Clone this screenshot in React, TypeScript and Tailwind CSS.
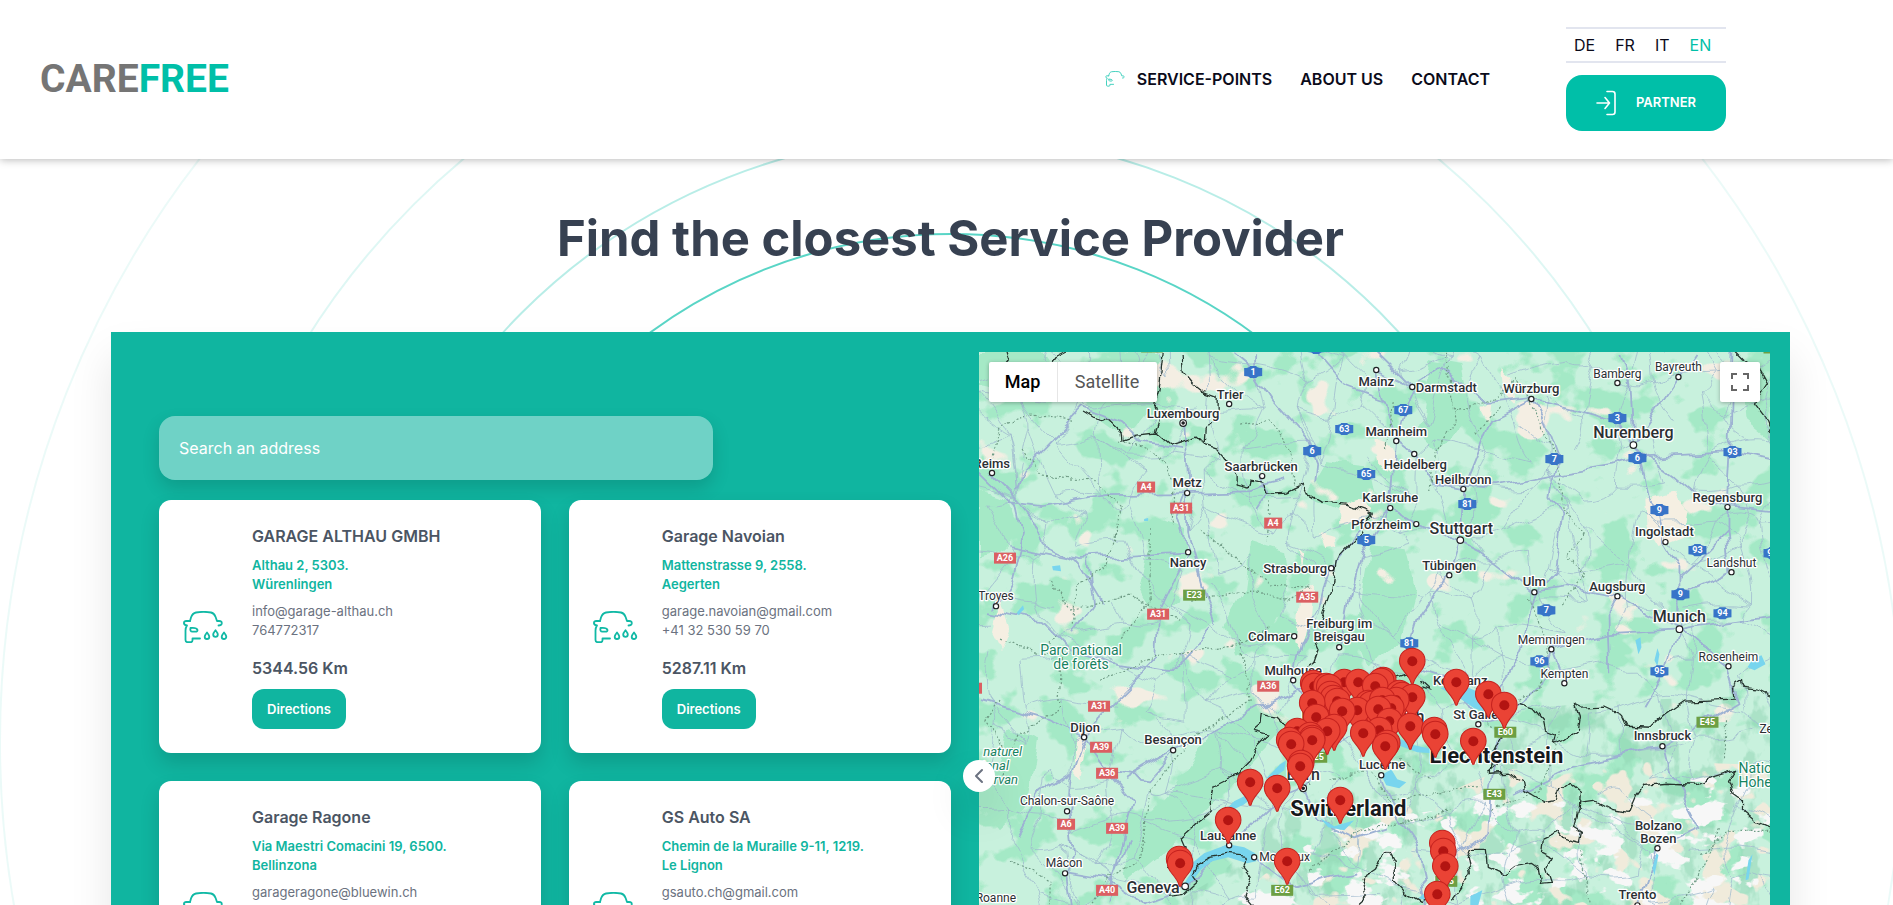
import React from "react";
import { ChevronLeft } from "lucide-react";

type Garage = {
  name: string;
  street: string;
  town: string;
  email: string;
  phone?: string;
  distance?: string;
};

const garages: Garage[] = [
  { name: "GARAGE ALTHAU GMBH", street: "Althau 2, 5303.", town: "Würenlingen", email: "info@garage-althau.ch", phone: "764772317", distance: "5344.56 Km" },
  { name: "Garage Navoian", street: "Mattenstrasse 9, 2558.", town: "Aegerten", email: "garage.navoian@gmail.com", phone: "+41 32 530 59 70", distance: "5287.11 Km" },
  { name: "Garage Ragone", street: "Via Maestri Comacini 19, 6500.", town: "Bellinzona", email: "garageragone@bluewin.ch" },
  { name: "GS Auto SA", street: "Chemin de la Muraille 9-11, 1219.", town: "Le Lignon", email: "gsauto.ch@gmail.com" },
];

function CarOutline() {
  return (
    <>
      <path d="M7 10 8 6.500C9 3.500 10.500 2 13 1.500 17 .8 24 .8 28 1.500c2.500.5 3.600 2 4.600 4.500L34 10h2c2.200 0 3 1 2.700 2.700C38.400 14 37.500 14.500 35.500 14.500" />
      <path d="M7 10H3.500C1.500 10 .8 11 1 12.500 1.300 14 2.500 14.300 4 14.500 3 16 2.500 17.500 2.500 19.500V29c0 1.500.8 2.200 2.200 2.200h3C9 31.200 9.500 30.500 9.500 29.300V27.500H17" />
      <path d="M7.500 17c3-.3 6.500.3 7 2 .2 1.200-.8 1.700-2 1.700H9.500C7.500 20.700 7 19 7.500 17Z" />
    </>
  );
}

function WashIcon({ className }: { className: string }) {
  return (
    <svg viewBox="0 0 45 32" className={className} fill="none" stroke="currentColor" strokeWidth="1.800" strokeLinecap="round" strokeLinejoin="round" aria-hidden="true">
      <CarOutline />
      <path d="M24 21.500c1.600 2 2.300 3 2.300 4.200a2.300 2.300 0 0 1-4.600 0c0-1.200.7-2.200 2.300-4.200Z" />
      <path d="M32.500 19.300c1.600 2 2.300 3 2.300 4.200a2.300 2.300 0 0 1-4.600 0c0-1.200.7-2.200 2.300-4.200Z" />
      <path d="M41 21.500c1.600 2 2.300 3 2.300 4.200a2.300 2.300 0 0 1-4.600 0c0-1.200.7-2.200 2.300-4.200Z" />
    </svg>
  );
}

function Header() {
  return (
    <header className="relative z-10 flex min-h-[159px] items-center justify-between bg-white pr-[167px] pb-[2px] pl-10 shadow-[0_1px_8px_rgba(0,0,0,0.28)]">
      <a href="#home" className="font-[Roboto,sans-serif] text-[39px] leading-10 font-bold text-[#757575]">
        CARE<span className="text-[#00bfa8]">FREE</span>
      </a>
      <div className="flex items-center gap-[76px]">
        <nav className="flex items-center gap-7 text-base font-semibold text-[#0b0b1a]">
          <a href="#service-points" className="flex items-center gap-3">
            <svg viewBox="0 0 40 33" className="h-4 w-5 text-[#3fcfbd]" fill="none" stroke="currentColor" strokeWidth="2" strokeLinecap="round" aria-hidden="true">
              <CarOutline />
            </svg>
            SERVICE-POINTS
          </a>
          <a href="#about">ABOUT US</a>
          <a href="#contact">CONTACT</a>
        </nav>
        <div className="flex w-40 flex-col gap-3">
          <div className="flex gap-5 border-y-2 border-[#e2e5ef] px-2 py-1 text-base text-[#0b0b1a]">
            <a href="#de">DE</a>
            <a href="#fr">FR</a>
            <a href="#it">IT</a>
            <a href="#en" className="text-[#00bfa8]">EN</a>
          </div>
          <button type="button" className="flex h-14 items-center justify-center gap-5 rounded-2xl bg-[#00bfa8] text-[13px] font-semibold text-white">
            <svg viewBox="0 0 20 26" className="h-[26px] w-5" fill="none" stroke="currentColor" strokeWidth="1.600" strokeLinecap="round" strokeLinejoin="round" aria-hidden="true">
              <path d="M11 1.500h5.500a2.500 2.500 0 0 1 2.500 2.500v18a2.500 2.500 0 0 1-2.500 2.500H11M1 13h12M9 7.500l4.500 5.500L9 18.500" />
            </svg>
            PARTNER
          </button>
        </div>
      </div>
    </header>
  );
}

function Rings() {
  const rings = [
    { r: 508, o: 0.65 },
    { r: 607, o: 0.28 },
    { r: 760, o: 0.13 },
    { r: 951, o: 0.08 },
  ];
  return (
    <svg className="pointer-events-none absolute top-0 left-1/2 h-[1540px] w-[1910px] -translate-x-1/2" viewBox="-959 -583 1910 1540" fill="none" stroke="#00bfa8" strokeWidth="2" aria-hidden="true">
      {rings.map((ring) => (
        <circle key={ring.r} r={ring.r} strokeOpacity={ring.o} />
      ))}
    </svg>
  );
}

function GarageCard({ garage }: { garage: Garage }) {
  return (
    <article className="flex min-h-[253px] items-center gap-6 rounded-xl bg-white p-6 shadow-[0_10px_20px_rgba(0,0,0,0.14)]">
      <WashIcon className="h-8 w-[45px] shrink-0 text-[#10b9a5]" />
      <div className="flex flex-col items-start self-stretch text-[13px] leading-[19px]">
        <h2 className="text-base font-semibold text-[#4b5563]">{garage.name}</h2>
        <p className="mt-2 font-semibold text-[#10b5a0]">
          {garage.street}
          <br />
          {garage.town}
        </p>
        <p className="mt-2 text-[#6b7280]">
          {garage.email}
          {garage.phone && (
            <>
              <br />
              {garage.phone}
            </>
          )}
        </p>
        {garage.distance && <p className="mt-4 text-base font-semibold text-[#4b5563]">{garage.distance}</p>}
        <button type="button" className="mt-auto h-10 rounded-xl bg-[#10b5a0] px-[15px] font-semibold text-white">
          Directions
        </button>
      </div>
    </article>
  );
}

type Dot = [number, number];
type Place = { t: string; x: number; y: number; s?: number; dot?: Dot; a?: "start" | "end"; capital?: boolean };

const places: Place[] = [
  { t: "Trier", x: 1230, y: 399, dot: [1229, 404] },
  { t: "Luxembourg", x: 1183, y: 418, dot: [1183, 423], capital: true },
  { t: "Reims", x: 1010, y: 468, a: "end", dot: [992, 473] },
  { t: "Metz", x: 1187, y: 487, dot: [1187, 493] },
  { t: "Saarbrücken", x: 1261, y: 471, dot: [1262, 476] },
  { t: "Nancy", x: 1188, y: 567, dot: [1188, 552] },
  { t: "Strasbourg", x: 1295, y: 573, dot: [1331, 568] },
  { t: "Troyes", x: 996, y: 600, s: 12, dot: [996, 606] },
  { t: "Colmar", x: 1269, y: 641, dot: [1294, 636] },
  { t: "Freiburg im", x: 1339, y: 628 },
  { t: "Breisgau", x: 1339, y: 641, dot: [1339, 647] },
  { t: "Pforzheim", x: 1381, y: 529, dot: [1416, 524] },
  { t: "Karlsruhe", x: 1390, y: 502, dot: [1390, 508] },
  { t: "Heidelberg", x: 1415, y: 469, dot: [1414, 454] },
  { t: "Mannheim", x: 1396, y: 436, dot: [1396, 441] },
  { t: "Mainz", x: 1376, y: 386, dot: [1376, 370] },
  { t: "Darmstadt", x: 1446, y: 392, dot: [1412, 387] },
  { t: "Würzburg", x: 1531, y: 393, dot: [1531, 399] },
  { t: "Bamberg", x: 1617, y: 378, s: 12, dot: [1617, 383] },
  { t: "Bayreuth", x: 1678, y: 371, s: 12, dot: [1678, 377] },
  { t: "Nuremberg", x: 1633, y: 438, s: 16, dot: [1633, 445] },
  { t: "Heilbronn", x: 1463, y: 484, dot: [1463, 489] },
  { t: "Stuttgart", x: 1461, y: 534, s: 16, dot: [1460, 540] },
  { t: "Regensburg", x: 1727, y: 502, dot: [1727, 507] },
  { t: "Ingolstadt", x: 1664, y: 536, dot: [1665, 542] },
  { t: "Landshut", x: 1731, y: 567, s: 12, dot: [1731, 572] },
  { t: "Tübingen", x: 1449, y: 570, dot: [1449, 575] },
  { t: "Ulm", x: 1534, y: 586, dot: [1534, 592] },
  { t: "Augsburg", x: 1617, y: 591, dot: [1617, 596] },
  { t: "Munich", x: 1679, y: 622, s: 16, dot: [1679, 629] },
  { t: "Memmingen", x: 1551, y: 644, s: 12, dot: [1551, 649] },
  { t: "Kempten", x: 1564, y: 678, s: 12, dot: [1564, 683] },
  { t: "Rosenheim", x: 1728, y: 661, s: 12, dot: [1728, 666] },
  { t: "Konstanz", x: 1460, y: 685 },
  { t: "St Gallen", x: 1479, y: 719, dot: [1478, 724] },
  { t: "Innsbruck", x: 1662, y: 740, dot: [1662, 746] },
  { t: "Zell am See", x: 1759, y: 733, s: 12, a: "start" },
  { t: "Bolzano", x: 1658, y: 830 },
  { t: "Bozen", x: 1658, y: 843, dot: [1657, 848] },
  { t: "Trento", x: 1637, y: 899, dot: [1637, 905] },
  { t: "Mulhouse", x: 1293, y: 675, dot: [1293, 680] },
  { t: "Dijon", x: 1085, y: 732, dot: [1084, 737] },
  { t: "Besançon", x: 1173, y: 744, dot: [1173, 750] },
  { t: "Chalon-sur-Saône", x: 1067, y: 805, s: 12, dot: [1067, 811] },
  { t: "Basel", x: 1301, y: 720, s: 16, a: "start" },
  { t: "Zürich", x: 1424, y: 722, s: 16, a: "end" },
  { t: "Bern", x: 1303, y: 780, s: 16, dot: [1303, 788], capital: true },
  { t: "Lausanne", x: 1228, y: 840, dot: [1229, 845] },
  { t: "Montreux", x: 1259, y: 861, s: 12, a: "start", dot: [1254, 857] },
  { t: "Geneva", x: 1153, y: 893, s: 16, dot: [1185, 886] },
  { t: "Mâcon", x: 1064, y: 867, s: 12, dot: [1065, 873] },
  { t: "Roanne", x: 1016, y: 902, s: 12, a: "end" },
  { t: "Lucerne", x: 1382, y: 769, dot: [1381, 775] },
];

type Shield = [string, number, number];
const redShields: Shield[] = [["A4", 1146, 487], ["A31", 1181, 508], ["A4", 1273, 523], ["A26", 1005, 558], ["A35", 1307, 597], ["A31", 1158, 614], ["A36", 1268, 686], ["A31", 1099, 706], ["A39", 1101, 747], ["A36", 1107, 773], ["A6", 1066, 824], ["A39", 1117, 828], ["A40", 1107, 890], ["A5", 973, 688]];
const greenShields: Shield[] = [["E23", 1194, 595], ["E60", 1505, 732], ["E43", 1494, 794], ["E45", 1707, 722], ["E62", 1282, 890], ["E25", 1316, 757], ["E35", 1446, 881], ["E25", 1152, 347], ["E49", 1774, 348]];
const blueShields: Shield[] = [["1", 1253, 372], ["63", 1344, 429], ["6", 1312, 451], ["65", 1366, 474], ["5", 1366, 540], ["3", 1316, 348], ["67", 1403, 410], ["7", 1554, 459], ["3", 1617, 418], ["6", 1637, 458], ["93", 1732, 452], ["81", 1467, 504], ["9", 1659, 510], ["93", 1697, 550], ["9", 1680, 594], ["7", 1546, 610], ["94", 1722, 613], ["92", 1772, 553], ["81", 1409, 643], ["96", 1539, 661], ["95", 1659, 671]];

const pins: Dot[] = [
  [1412, 661], [1383, 680], [1381, 681], [1344, 682], [1358, 682], [1313, 683], [1456, 682], [1314, 686], [1375, 686], [1326, 686], [1329, 687], [1488, 694],
  [1399, 693], [1402, 695], [1330, 694], [1412, 697], [1333, 698], [1396, 700], [1337, 701], [1368, 703], [1312, 703], [1371, 704], [1504, 705], [1382, 700], [1391, 708], [1357, 710], [1378, 709], [1342, 711],
  [1316, 717], [1389, 721], [1410, 726], [1334, 727], [1379, 730], [1434, 730], [1297, 731], [1327, 731], [1363, 733], [1435, 734], [1310, 735], [1312, 738], [1289, 740], [1312, 740], [1473, 741], [1387, 743], [1291, 744], [1385, 746],
  [1301, 763], [1300, 766], [1250, 782], [1277, 788], [1340, 800], [1228, 820], [1442, 843], [1443, 851], [1179, 859], [1287, 861], [1180, 863], [1445, 866], [1437, 894],
];

const borders = [
  "M1006 352l3 8-4 5M1067 352l-10 5-6 8M1083 410l10 6 16 4 13 12 1 8 14-5 18-2 15 13 13-4 14-5 7 7 12 4 9 10 11 17v10l12 3 2-8 13 2 4 11 19-1 17-8 5 11 12 7 26 2 26 9-11 20-12 13-13 14-4 26-6 17-5 16M1314 640l4 9-5 14-10 7",
  "M1155 433l4-13-5-13 5-17 4-38M1204 444l1-14 12-17v-16l-14-5-10-8-10-12-1-20",
  "M1290 730l-13-13-16-3-1 9-8 7 15 4-10 10-7 17-13 13-24 12-3 15 1 10-15 12-15 14 4 9-7 10-9 12M1167 896l17-2 14-13-5-7 4-9 13-8 17-3 20 2-5 11 9 11-7 17 10 12",
  "M1357 905l10-9-5-18 12-8 6-10 10-9 5 9v20l12 13 13 8 14-5M1452 900l10-14 8-13-3-17 3-7h15l2 17 17 8 10-8 18-3 7 5 2 15 10-1-5-14 5-10-10-5 2-15 15-7 5 7 16 4 2-10-8-5 5-20 1-17-10-8-12 10-2 8-10 2-20-12-2-10-16-7-17 1 1-18 6-12 5-9M1488 772l8-6-2-12",
  "M1517 703l16 5 10 12 2 10 10 4-2 11 12-5 12-10 2-13-4-12 6 3 23-1 17 8 5 11 25 1 13-12 20-14 50-2-2-12 9-7 1 7 15 2 14 7",
  "M1578 802l15-2 17 9 18 3 7-16 8-11 23-2 30 1 17-8 23-7-8 11 5 13 10 7v10l13 11 14 6",
  "M1735 352l8 8 18 12 6 11-13 20 9 12 7 17",
  "M1412 675l-7-1-12 4M1420 680l11 10-8-3-8-2",
];

const highways = [
  "M979 470l36 35 6 28-11 50-14 24M1010 502l34 4 60-12 83-1 60-2 40-10M1007 545l70 14 110-7M1185 423l3 60v50l16 60 12 32M1187 493l-10 25 11 35-28 60-2 45-60 60-16 30",
  "M992 473l20 20 20 25 15 30 30 15 24 40M990 610l50 10 30 30 40 14 60 10 40-45M1088 560l5 45-20 30",
  "M979 700l70 20 36 17 25 35 40 5 23-25 60-30 50-28 46-18M1084 737l-12 35-30 20-25 45M1072 772l-5 39 5 40-7 22 4 32M1107 773l25 30-12 45-12 57M1173 750l-50 30M1065 873l48 8 30 20 42-15M1108 890l20-50",
  "M1331 568l-10 40-20 35-8 37 15 20 40-8M1331 568l30-36 29-24 6-67-20-71M1339 647l8-45 15-50 28-44 M1396 441l10-40 6-14-36-17",
  "M1390 508l26 16 44 16 20 10 54 42 30-5 53 9 62 33 49 37M1396 441l18 13 20 30 29 5-3 51-11 35-30 42-14 45M1434 484l60 2 60-12 60-10 20-6 60-4 38-2 38 8",
  "M1412 387l30-20 40 35 49-5 10 20 15 40-5 42 10 15-8 60-20 22-10 50-14 30-20 28M1376 352l36 35M1531 399l-40 20-10 25-18 45M1531 399l50 12 36 10 16 24 5 5 10 50 11 12 5 30 15 25v50M1620 352l10 30 3 63M1633 445l40 30 30 25 24 7 0 25-25 25-22 20M1727 507l46 5M1732 352l-2 100-3 55",
  "M1633 445l60-90M1679 629l0-35 52-22-4-40M1679 629l93-15M1679 629l-70 4-58 16-12 40-30 25M1679 629l-14 42-20 35M1679 629l49 37 10 35-76 45-92 20-58 28M1551 649l13 34M1662 746l5 22 22 40 10 20-42 20-20 57M1617 596l-10 20 2 60",
  "M1412 668l44 15 25 40 25-5-10 35-5 40-2 40-44 28-12 50M1303 788l-25 10-49 47M1303 788l13 32 40 18 30-10M1381 775l15 40 20 30 10 60M1229 845l-42 41M1254 857l40 30 40-12 20-4M1303 788l20-40 60-25 30-15",
  "M1229 352l24 20 20 30 35 40 8 20-2 20M1262 476l5 20-10 15M1253 352v20M1316 352l30 35 40 15M1083 408l-60 62-8 20M1083 408l40 15 20 20 40 5",
];

const regionLines = [
  "M990 465l12-40 30-10 40 5M1022 450l20 25 50 5 30 25-15 60-30 20-5 40M1120 440l40 15 15 30-2 40M1150 530l0 70-30 40M1200 530l20 15 50 40 40 2M1240 425l30-5 20 30 5 40M1270 500l-4 40M1190 600l60-10 40 10 20-15",
  "M1050 580l20 30 60-15 50 25M1063 650l-5 60-40 25-15 40M1100 680l60-25 80-10 30-20M1000 640l45 15 10-20M1240 640l10 60-60 40-40 50-10 70-30 15-30 45M1010 860l40 20 0 25M1000 700l-15 20 20 30",
  "M1445 352l10 70-20 30-8 40M1455 410l40-10 20-20 20 30 10 30 10 10 8 60 20 25-15 20 15 20-20 30M1528 600l20 40-10 50-20 10M1500 405l-25 30M1395 400l-10 50",
  "M1330 780l40-10 20 30 30-5 60-10M1400 760l30 20M1480 720l20 10M1310 870l50-40 60-10 30-10M1560 730l-20 60-50 20M1580 850l10 55M1725 720l0 40M1720 830l-25 50-15 25M1770 830l-40 0-30 25M1280 735l30 50",
];

const lakes = [
  "M1182 887 1190 874 1193 862 1204 853 1228 844 1244 847 1255 853 1256 861 1247 863 1228 857 1212 861 1201 869 1193 880Z",
  "M1222 813 1234 801 1248 794 1256 795 1244 804 1230 811Z",
  "M1266 778 1280 764 1286 760 1284 770 1274 777Z",
  "M1440 688 1458 683 1474 690 1490 700 1492 714 1474 708 1458 697Z",
  "M1396 737 1414 745 1428 748 1433 753 1417 752 1398 745Z",
  "M1381 775 1391 769 1397 779 1406 782 1399 788 1386 785Z",
  "M1320 818 1334 826 1354 820 1358 816 1344 830 1328 827Z",
  "M1635 640l5-3 1 10-3 7zM1654 660l3-12 2 6-2 12zM1752 659l9-4 4 9-11 6-7-3z",
  "M1470 896l12-6-4 15h-8zM1745 880l3-20 4-6-4 25zM1652 868l4-15 2 2-4 20zM1052 566l8-1 1 6-8-1zM1017 612l6-7 1 4-6 6zM1144 519l4-1v3h-4zM1418 898l8-6 2 8z",
];

function seeded(seed: number) {
  let state = seed;
  return () => {
    state = (state * 16807) % 2147483647;
    return state / 2147483647;
  };
}

function localRoads() {
  const random = seeded(41);
  const cols = 24;
  const rows = 20;
  const nodes: Dot[][] = [];
  for (let r = 0; r < rows; r++) {
    const row: Dot[] = [];
    for (let c = 0; c < cols; c++) {
      row.push([Math.round(960 + c * 37 + (random() - 0.5) * 34), Math.round(335 + r * 37 + (random() - 0.5) * 34)]);
    }
    nodes.push(row);
  }
  let d = "";
  for (let r = 0; r < rows - 1; r++) {
    for (let c = 0; c < cols - 1; c++) {
      const [x, y] = nodes[r][c];
      const targets = [nodes[r][c + 1], nodes[r + 1][c], nodes[r + 1][c + 1]];
      targets.forEach(([tx, ty], i) => {
        if (random() < (i === 2 ? 0.25 : 0.62)) {
          d += `M${x} ${y}Q${Math.round((x + tx) / 2 + (random() - 0.5) * 14)} ${Math.round((y + ty) / 2 + (random() - 0.5) * 14)} ${tx} ${ty}`;
        }
      });
    }
  }
  return d;
}

const localRoadPath = localRoads();

function ShieldMark({ shield, fill }: { shield: Shield; fill: string }) {
  const [label, x, y] = shield;
  const w = label.length > 2 ? 22 : 18;
  return (
    <g>
      <rect x={x - w / 2} y={y - 5.5} width={w} height="11" fill={fill} />
      <text x={x} y={y + 3} fontSize="9" fontWeight="700" fill="#fff" textAnchor="middle">{label}</text>
    </g>
  );
}

function MapDrawing() {
  return (
    <svg viewBox="979 352 791 848" preserveAspectRatio="xMinYMin slice" className="h-full w-full font-[Roboto,sans-serif]" role="img" aria-label="Map of service points">
      <defs>
        <filter id="forest" x="0" y="0" width="1" height="1" colorInterpolationFilters="sRGB">
          <feTurbulence type="fractalNoise" baseFrequency="0.022 0.026" numOctaves="4" seed="8" />
          <feColorMatrix values="0 0 0 0 0.645  0 0 0 0 0.915  0 0 0 0 0.775  14 0 0 0 -7.500" />
          <feComposite in2="SourceGraphic" operator="in" />
        </filter>
        <filter id="relief" x="0" y="0" width="1" height="1" colorInterpolationFilters="sRGB">
          <feTurbulence type="fractalNoise" baseFrequency="0.05 0.03" numOctaves="4" seed="21" />
          <feColorMatrix values="0 0 0 0 0.56  0 0 0 0 0.83  0 0 0 0 0.70  0 9 0 0 -4.600" />
          <feComposite in2="SourceGraphic" operator="in" />
        </filter>
        <filter id="snow" x="0" y="0" width="1" height="1" colorInterpolationFilters="sRGB">
          <feTurbulence type="fractalNoise" baseFrequency="0.032 0.045" numOctaves="4" seed="5" />
          <feColorMatrix values="0 0 0 0 0.97  0 0 0 0 0.97  0 0 0 0 0.97  0 0 18 0 -10.300" />
          <feComposite in2="SourceGraphic" operator="in" />
        </filter>
        <filter id="rock" x="0" y="0" width="1" height="1" colorInterpolationFilters="sRGB">
          <feTurbulence type="fractalNoise" baseFrequency="0.03 0.035" numOctaves="3" seed="33" />
          <feColorMatrix values="0 0 0 0 0.94  0 0 0 0 0.92  0 0 0 0 0.86  18 0 0 0 -10.300" />
          <feComposite in2="SourceGraphic" operator="in" />
        </filter>
        <filter id="fields" x="0" y="0" width="1" height="1" colorInterpolationFilters="sRGB">
          <feTurbulence type="fractalNoise" baseFrequency="0.02 0.025" numOctaves="3" seed="62" />
          <feColorMatrix values="0 0 0 0 0.955  0 0 0 0 0.935  0 0 0 0 0.89  0 20 0 0 -13.900" />
          <feComposite in2="SourceGraphic" operator="in" />
        </filter>
        <filter id="wobble" filterUnits="userSpaceOnUse" x="960" y="330" width="830" height="620">
          <feTurbulence type="fractalNoise" baseFrequency="0.08" numOctaves="2" seed="3" />
          <feDisplacementMap in="SourceGraphic" scale="8" xChannelSelector="R" yChannelSelector="G" />
        </filter>
        <filter id="curve" filterUnits="userSpaceOnUse" x="960" y="330" width="830" height="620">
          <feTurbulence type="fractalNoise" baseFrequency="0.035" numOctaves="2" seed="9" />
          <feDisplacementMap in="SourceGraphic" scale="16" xChannelSelector="R" yChannelSelector="G" />
        </filter>
        <symbol id="pin" viewBox="0 0 28 38" overflow="visible">
          <path d="M14 1C6.800 1 1.200 6.600 1.200 13.700c0 4.300 1.900 7.300 4.600 10.500 3.500 4.200 6.300 7.500 7.300 12.300.2.700 1.600.7 1.800 0 1-4.800 3.800-8.100 7.300-12.300 2.700-3.200 4.600-6.200 4.600-10.500C26.800 6.600 21.200 1 14 1Z" fill="#ea4335" stroke="#c5221f" strokeWidth="1" />
          <circle cx="14" cy="14" r="5" fill="#b31412" />
        </symbol>
      </defs>

      <rect x="979" y="352" width="791" height="848" fill="#c8f1dd" />
      <rect x="979" y="352" width="791" height="848" filter="url(#forest)" />
      <g fill="#a5e9c6" filter="url(#curve)">
        <path d="M979 352h60l20 30-30 12-50-8zM1080 380l40-28h40l-15 60-20 25-35-25zM979 490l30 10 10 30-20 20-20 5zM1155 520l30 10-5 70-25 20-15-30z" />
        <path d="M1250 540l35 10 5 40-25 45-30 20-10-30 20-35zM1370 545l35 5 10 40-15 55-35 20-10-30zM1325 460l45 5 5 30-35 15-35-15zM1430 360l30 5 10 50-30 40-20-20z" />
        <path d="M1290 720l-70 75-60 60-30 25-5-35 45-50 40-60 50-30zM1010 730l30 10-10 60-30 30-20-25zM1740 360l30 20v60l-25-20z" />
      </g>
      <path d="M979 352h791v370H979z" filter="url(#fields)" />
      <path d="M1170 905l50-30 60-65 80-40 80-30 60-30 130-10 140-5v505H1180z" filter="url(#relief)" opacity="0.500" />
      <path d="M1230 905l50-45 70-35 90-30 60-25 130-10 140 5v435H1230z" filter="url(#rock)" />
      <path d="M1230 905l50-45 70-40 90-10 60-25 130-5 140-5v425H1230z" filter="url(#snow)" />
      <g fill="#f5efe2" filter="url(#wobble)">
        <path d="M1375 440l15 4 8 20-8 8-12-10zM1340 505l20-6 12 10-6 12-26 3zM1320 532l14 4 2 10-10 2zM1298 548l6 6-2 12zM1300 590l14-5-2 30-10 35-8-5zM1500 370l10 10 4 24-12-12zM1480 408l10-5-2 20zM1645 500l30-8 12 20-4 25-25 10-12-20zM1000 600l-8 30 10 20 8-20zM1080 725l8 5-8 50-6-5z" />
      </g>
      <g fill="none" stroke="#9fb9cf" strokeLinejoin="round" filter="url(#curve)">
        <path d={localRoadPath} strokeWidth="0.900" strokeOpacity="0.850" />
      </g>
      <g fill="none" stroke="#9db2d3" strokeWidth="1.800" strokeLinejoin="round" filter="url(#curve)">
        {highways.map((d) => <path key={d} d={d} />)}
      </g>
      <g fill="#78d5ee">{lakes.map((d) => <path key={d} d={d} />)}</g>
      <g fill="none" stroke="#6f9c86" strokeWidth="1.200" strokeDasharray="2 2" filter="url(#wobble)">
        {regionLines.map((d) => <path key={d} d={d} />)}
      </g>
      <g fill="none" stroke="#26352f" strokeWidth="1.300" strokeLinejoin="round" filter="url(#wobble)">
        {borders.map((d) => <path key={d} d={d} />)}
      </g>

      {redShields.map((s) => <ShieldMark key={s.join()} shield={s} fill="#db5f62" />)}
      {greenShields.map((s) => <ShieldMark key={s.join()} shield={s} fill="#6d9f43" />)}
      {blueShields.map((s) => (
        <g key={s.join()}>
          <path d={`M${s[1] - 9} ${s[2] - 4}q5 0 6-2h6q1 2 6 2v8q-5 0-6 2h-6q-1-2-6-2z`} fill="#3874c8" />
          <text x={s[1]} y={s[2] + 3} fontSize="9" fontWeight="700" fill="#fff" textAnchor="middle">{s[0]}</text>
        </g>
      ))}

      <g stroke="#fff" strokeWidth="2.500" strokeLinejoin="round" paintOrder="stroke" fill="#2b2f33">
        {places.map((p) => (
          <text key={p.t} x={p.x} y={p.y} fontSize={p.s ?? 13} textAnchor={p.a ?? "middle"} fontWeight={p.s === 12 ? 400 : 500}>{p.t}</text>
        ))}
        <g fill="#17835f" fontSize="14">
          <text x="1081" y="655" textAnchor="middle">Parc national</text>
          <text x="1081" y="669" textAnchor="middle">de forêts</text>
          <text x="1738" y="773">National</text>
          <text x="1738" y="787">Hohe</text>
          <g fontStyle="italic" textAnchor="end" fontSize="13">
            <text x="1022" y="756">naturel</text>
            <text x="1009" y="770">régional</text>
            <text x="1018" y="784">Morvan</text>
          </g>
        </g>
        <g fontSize="22" fontWeight="700" fill="#17191c">
          <text x="1290" y="816">Switzerland</text>
          <text x="1496" y="763" textAnchor="middle">Liechtenstein</text>
        </g>
      </g>
      {places.map((p) => p.dot && (
        <g key={p.t} stroke="#202124" strokeWidth="1.200">
          <circle cx={p.dot[0]} cy={p.dot[1]} r={p.s === 16 || p.capital ? 3.3 : 2.600} fill="#fff" />
          {p.capital && <circle cx={p.dot[0]} cy={p.dot[1]} r="1.200" fill="#202124" />}
        </g>
      ))}
      {pins.map(([x, y]) => <use key={`${x}-${y}`} href="#pin" x={x - 14} y={y - 14} width="28" height="38" />)}
    </svg>
  );
}

function MapPanel() {
  return (
    <div className="relative h-[848px] min-w-0">
      <div className="h-full overflow-hidden">
        <MapDrawing />
      </div>
      <div className="absolute top-[10px] left-[10px] flex h-10 rounded-[2px] bg-white font-[Roboto,sans-serif] text-lg shadow-[0_1px_4px_rgba(0,0,0,0.3)]">
        <button type="button" className="w-[69px] border-r border-[#e6e6e6] font-medium text-black">Map</button>
        <button type="button" className="w-[99px] text-[#565656]">Satellite</button>
      </div>
      <button type="button" aria-label="Toggle fullscreen view" className="absolute top-[10px] right-[10px] flex size-10 items-center justify-center rounded-[2px] bg-white shadow-[0_1px_4px_rgba(0,0,0,0.3)]">
        <svg viewBox="0 0 18 18" className="size-[18px]" fill="none" stroke="#666" strokeWidth="2" aria-hidden="true">
          <path d="M1 6V1h5M12 1h5v5M17 12v5h-5M6 17H1v-5" />
        </svg>
      </button>
      <button type="button" aria-label="Collapse list" className="absolute top-1/2 left-0 flex size-8 -translate-x-1/2 -translate-y-1/2 items-center justify-center rounded-full bg-white text-[#6b7280] shadow-[0_20px_40px_rgba(0,0,0,0.14)]">
        <ChevronLeft className="size-6" strokeWidth={2} />
      </button>
    </div>
  );
}

export default function App() {
  return (
    <div className="h-screen overflow-x-hidden overflow-y-auto bg-white font-[Inter,sans-serif] [scrollbar-width:none]">
      <Header />
      <main className="relative overflow-hidden pr-[103px] pb-16 pl-[111px]">
        <Rings />
        <h1 className="relative pt-[50px] pb-[63px] text-center text-[49px] leading-[60px] font-bold text-[#374151]">Find the closest Service Provider</h1>
        <section className="relative grid grid-cols-2 gap-7 bg-[#10b5a0] py-5 pr-5 pl-12 shadow-[0_25px_40px_rgba(0,0,0,0.10)]">
          <div className="pt-16">
            <input
              type="text"
              aria-label="Search an address"
              placeholder="Search an address"
              className="block h-16 w-[70%] rounded-2xl bg-white/40 px-5 text-base text-white shadow-[0_8px_18px_rgba(0,0,0,0.14)] outline-none placeholder:text-white"
            />
            <div className="mt-5 grid grid-cols-2 gap-7">
              {garages.map((garage) => (
                <GarageCard key={garage.name} garage={garage} />
              ))}
            </div>
          </div>
          <MapPanel />
        </section>
      </main>
    </div>
  );
}
